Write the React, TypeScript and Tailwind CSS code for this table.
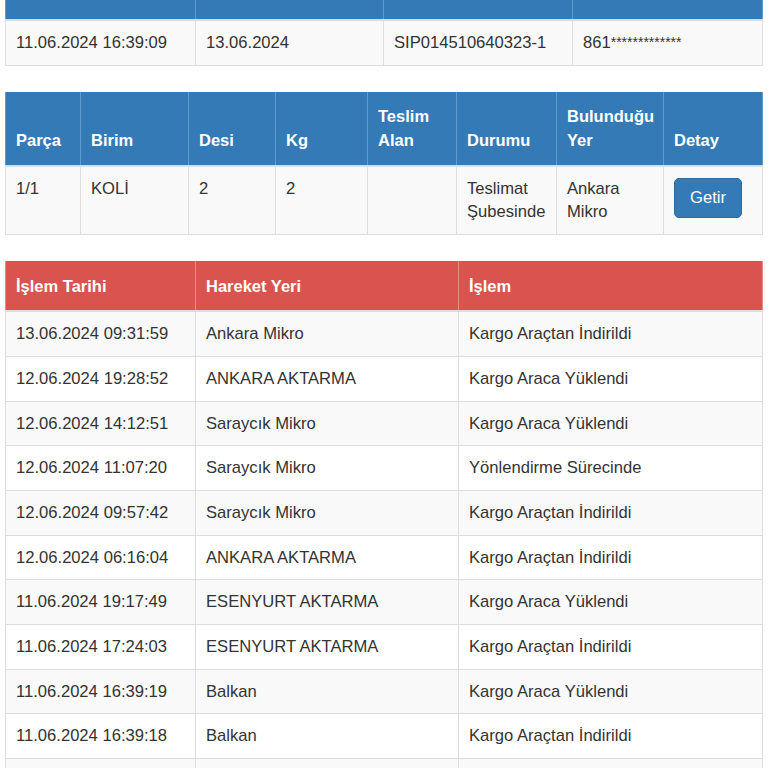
import React from 'react';

const font = { fontFamily: '"Liberation Sans", Arial, Helvetica, sans-serif' };

const hareketler = [
  ['13.06.2024 09:31:59', 'Ankara Mikro', 'Kargo Araçtan İndirildi'],
  ['12.06.2024 19:28:52', 'ANKARA AKTARMA', 'Kargo Araca Yüklendi'],
  ['12.06.2024 14:12:51', 'Saraycık Mikro', 'Kargo Araca Yüklendi'],
  ['12.06.2024 11:07:20', 'Saraycık Mikro', 'Yönlendirme Sürecinde'],
  ['12.06.2024 09:57:42', 'Saraycık Mikro', 'Kargo Araçtan İndirildi'],
  ['12.06.2024 06:16:04', 'ANKARA AKTARMA', 'Kargo Araçtan İndirildi'],
  ['11.06.2024 19:17:49', 'ESENYURT AKTARMA', 'Kargo Araca Yüklendi'],
  ['11.06.2024 17:24:03', 'ESENYURT AKTARMA', 'Kargo Araçtan İndirildi'],
  ['11.06.2024 16:39:19', 'Balkan', 'Kargo Araca Yüklendi'],
  ['11.06.2024 16:39:18', 'Balkan', 'Kargo Araçtan İndirildi'],
];

const td = 'border border-[#ddd] px-[10px] py-[10px] leading-[23.7px] align-top';
const thBlue = 'border-x border-[#5f9bd3] border-b-2 border-b-[#ddd] px-[10px] py-[12.5px] leading-[24px] align-bottom text-left font-bold text-[16.5px]';
const thRed = 'border-x border-[#e98a87] border-b-2 border-b-[#ddd] px-[10px] py-[12.5px] leading-[24px] align-bottom text-left font-bold text-[16.5px]';

export default function App() {
  return (
    <div className="h-[768px] overflow-hidden bg-white pl-[5px] pr-[6px] text-[16.6px] text-[#333]" style={font}>
      {/* gönderi bilgisi */}
      <table className="w-full table-fixed border-collapse mb-[26px]">
        <colgroup>
          <col className="w-[190px]" />
          <col className="w-[188px]" />
          <col className="w-[189px]" />
          <col className="w-[190px]" />
        </colgroup>
        <thead>
          <tr className="bg-[#337ab7] text-white">
            <th className="border-x border-[#5f9bd3] border-b-2 border-b-[#ddd] h-[20px] p-0"></th>
            <th className="border-x border-[#5f9bd3] border-b-2 border-b-[#ddd] h-[20px] p-0"></th>
            <th className="border-x border-[#5f9bd3] border-b-2 border-b-[#ddd] h-[20px] p-0"></th>
            <th className="border-x border-[#5f9bd3] border-b-2 border-b-[#ddd] h-[20px] p-0"></th>
          </tr>
        </thead>
        <tbody>
          <tr className="bg-[#f9f9f9]">
            <td className={td}>11.06.2024 16:39:09</td>
            <td className={td}>13.06.2024</td>
            <td className={td}>SIP014510640323-1</td>
            <td className={td}>861<span className="text-[14px] align-top">*************</span></td>
          </tr>
        </tbody>
      </table>

      {/* parça bilgisi */}
      <table className="w-full table-fixed border-collapse mb-[26px]">
        <colgroup>
          <col className="w-[75px]" />
          <col className="w-[108px]" />
          <col className="w-[87px]" />
          <col className="w-[92px]" />
          <col className="w-[89px]" />
          <col className="w-[100px]" />
          <col className="w-[107px]" />
          <col className="w-[99px]" />
        </colgroup>
        <thead>
          <tr className="bg-[#337ab7] text-white">
            <th className={thBlue}>Parça</th>
            <th className={thBlue}>Birim</th>
            <th className={thBlue}>Desi</th>
            <th className={thBlue}>Kg</th>
            <th className={thBlue}>Teslim<br />Alan</th>
            <th className={thBlue}>Durumu</th>
            <th className={thBlue}>Bulunduğu<br />Yer</th>
            <th className={thBlue}>Detay</th>
          </tr>
        </thead>
        <tbody>
          <tr className="bg-[#f9f9f9]">
            <td className={td}>1/1</td>
            <td className={td}>KOLİ</td>
            <td className={td}>2</td>
            <td className={td}>2</td>
            <td className={td}></td>
            <td className={td}>Teslimat<br />Şubesinde</td>
            <td className={td}>Ankara<br />Mikro</td>
            <td className="border border-[#ddd] px-[10px] pt-[11px] align-top">
              <button className="rounded-[5px] border border-[#2e6da4] bg-[#337ab7] px-[15px] py-[7px] leading-[24px] text-white">
                Getir
              </button>
            </td>
          </tr>
        </tbody>
      </table>

      {/* hareketler */}
      <table className="w-full table-fixed border-collapse">
        <colgroup>
          <col className="w-[190px]" />
          <col className="w-[263px]" />
          <col className="w-[304px]" />
        </colgroup>
        <thead>
          <tr className="bg-[#d9534f] text-white">
            <th className={thRed}>İşlem Tarihi</th>
            <th className={thRed}>Hareket Yeri</th>
            <th className={thRed}>İşlem</th>
          </tr>
        </thead>
        <tbody>
          {hareketler.map((h, i) => (
            <tr key={i} className={i % 2 === 0 ? 'bg-[#f9f9f9]' : 'bg-white'}>
              <td className={td}>{h[0]}</td>
              <td className={td}>{h[1]}</td>
              <td className={td}>{h[2]}</td>
            </tr>
          ))}
          <tr className="bg-[#f9f9f9]">
            <td className={td}>&nbsp;</td>
            <td className={td}>&nbsp;</td>
            <td className={td}>&nbsp;</td>
          </tr>
        </tbody>
      </table>
    </div>
  );
}
